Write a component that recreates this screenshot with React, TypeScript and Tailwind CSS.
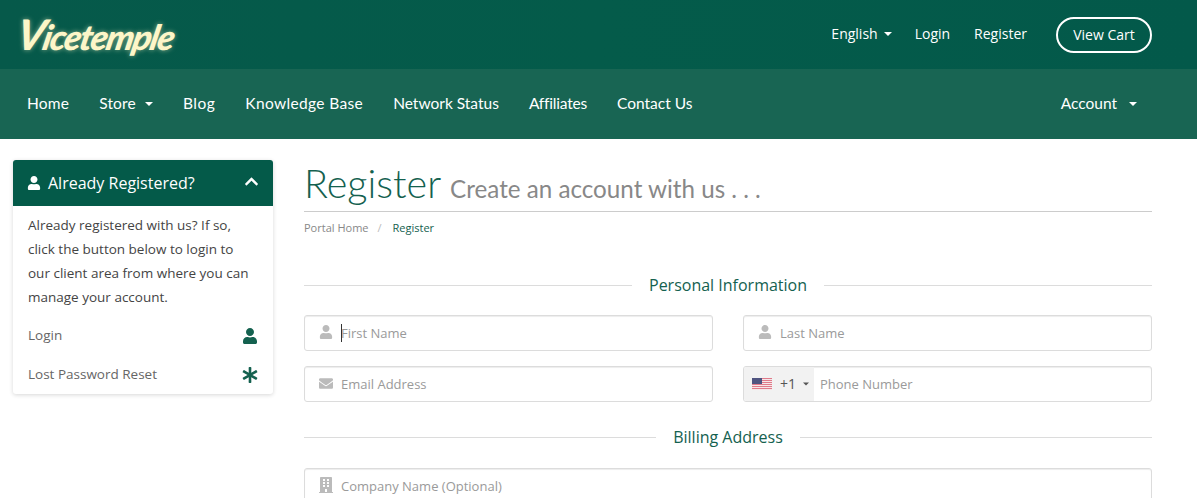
import { FaAsterisk, FaBuilding, FaChevronUp, FaEnvelope, FaUser } from 'react-icons/fa';
import type { ReactNode } from 'react';

const Caret = ({ className = 'border-t-white' }: { className?: string }) => (
  <span className={`inline-block h-0 w-0 border-x-4 border-t-4 border-x-transparent ${className}`} />
);

function SectionTitle({ children }: { children: string }) {
  return (
    <div className="flex items-center gap-[17px]">
      <div className="h-px flex-1 bg-[#dcdcdc]" />
      <span className="text-base leading-6 text-[#14614f]">{children}</span>
      <div className="h-px flex-1 bg-[#dcdcdc]" />
    </div>
  );
}

function Field({ icon, placeholder, cursor }: { icon: ReactNode; placeholder: string; cursor?: boolean }) {
  return (
    <div className="relative h-9 rounded-[3px] border border-[#dcdcdc] bg-white shadow-[inset_0_1px_1px_rgba(0,0,0,0.075)]">
      <span className="absolute left-3.5 top-0 flex h-[32px] w-[14px] items-center justify-center text-[14px] text-[#bbbbbb]">
        {icon}
      </span>
      <input
        placeholder={placeholder}
        readOnly
        className="h-full w-full bg-transparent pl-9 text-[13px] outline-none placeholder:text-[#9a9a9a]"
      />
      {cursor && <span className="absolute left-9 top-2 h-[18px] w-px bg-[#333333]" />}
    </div>
  );
}

function PhoneField() {
  return (
    <div className="flex h-9 overflow-hidden rounded-[3px] border border-[#dcdcdc] bg-white shadow-[inset_0_1px_1px_rgba(0,0,0,0.075)]">
      <div className="flex w-[70px] items-center bg-[#f2f2f2] pl-2">
        <svg width="20" height="12" viewBox="0 0 20 12" className="mb-[1px] shrink-0">
          <rect width="20" height="12" fill="#f6e6e8" />
          <rect y="0" width="20" height="1" fill="#e07a8a" />
          <rect y="2" width="20" height="1" fill="#e07a8a" />
          <rect y="4" width="20" height="1" fill="#e07a8a" />
          <rect y="6" width="20" height="1" fill="#e07a8a" />
          <rect y="8" width="20" height="1" fill="#e07a8a" />
          <rect y="10" width="20" height="1" fill="#e07a8a" />
          <rect width="10" height="6" fill="#4f5480" />
        </svg>
        <span className="ml-2 text-sm text-[#555555]">+1</span>
        <Caret className="ml-[6px] scale-75 border-t-[#555555]" />
      </div>
      <input
        placeholder="Phone Number"
        readOnly
        className="h-full flex-1 bg-transparent pl-1.5 text-[13px] outline-none placeholder:text-[#9a9a9a]"
      />
    </div>
  );
}

export default function App() {
  return (
    <div className="h-[498px] overflow-hidden bg-white font-['Open_Sans',sans-serif] text-[#444444]">
      {/* Top bar */}
      <header className="flex h-[69px] items-center justify-between bg-gradient-to-r from-[#06594a] via-[#045b4a] to-[#03594a] pl-[18px] pr-[45px]">
        <span className="-skew-x-12 pb-[2px] font-['Lato',sans-serif] text-[35px] font-black italic leading-none tracking-[-1.5px] text-[#fdf6c8] [text-shadow:0_0_5px_rgba(253,246,200,0.55)]">
          <span className="text-[42px]">V</span>icetemple
        </span>
        <div className="flex items-center text-sm text-white">
          <div className="flex items-center pb-[2px]">
            <span>English</span>
            <Caret className="ml-[6px] border-t-white" />
            <span className="ml-[23px]">Login</span>
            <span className="ml-6">Register</span>
          </div>
          <span className="ml-[29px] flex h-[36px] w-[96px] items-center justify-center rounded-full border-2 border-white">
            View Cart
          </span>
        </div>
      </header>

      {/* Main nav */}
      <nav className="flex h-[70px] items-center justify-between bg-[#186553] pl-[27px] pr-[60px] font-['Lato',sans-serif] text-[15.5px] text-white">
        <div className="flex items-center gap-[30px]">
          <span className="tracking-[0.2px]">Home</span>
          <span className="flex items-center tracking-[0.2px]">
            Store
            <Caret className="ml-[9px] border-t-white" />
          </span>
          <span className="tracking-[0.5px]">Blog</span>
          <span className="tracking-[0.35px]">Knowledge Base</span>
          <span>Network Status</span>
          <span className="tracking-[-0.2px]">Affiliates</span>
          <span>Contact Us</span>
        </div>
        <span className="flex items-center">
          Account
          <Caret className="ml-[12px] border-t-white" />
        </span>
      </nav>

      <div className="flex gap-[31px] pl-[13px] pr-[45px] pt-[21px]">
        {/* Sidebar */}
        <aside className="w-[260px] shrink-0 self-start rounded-[3px] bg-white shadow-[0_1px_4px_rgba(0,0,0,0.16)]">
          <div className="flex h-[46px] items-center justify-between rounded-t-[3px] bg-[#045a49] pl-[14px] pr-[14px] text-white">
            <span className="flex items-center gap-[7px] text-base">
              <FaUser className="text-[14px]" />
              Already Registered?
            </span>
            <FaChevronUp className="mb-[4px] text-[15px]" />
          </div>
          <p className="px-[15px] pt-[7px] text-[13.5px] leading-6 text-[#444444]">
            Already registered with us? If so, click the button below to login to our client area from where you can
            manage your account.
          </p>
          <div className="mt-[7px] flex h-[39px] items-center justify-between pl-[15px] pr-[15px] text-[13.5px] text-[#666666]">
            Login
            <FaUser className="text-base text-[#14614f]" />
          </div>
          <div className="flex h-[39px] items-center justify-between pl-[15px] pr-[15px] text-[13.5px] text-[#666666]">
            Lost Password Reset
            <FaAsterisk className="text-base text-[#14614f]" />
          </div>
        </aside>

        {/* Content */}
        <main className="min-w-0 flex-1">
          <div className="flex h-[52px] items-baseline gap-[9px] border-b border-[#cccccc] font-['Lato',sans-serif]">
            <h1 className="text-[39.5px] font-light leading-[46px] text-[#14614f]">Register</h1>
            <span className="text-[24.2px] text-[#888888]">Create an account with us . . .</span>
          </div>
          <div className="mt-[8px] flex items-center text-[11px] leading-[16px] text-[#888888]">
            Portal Home
            <span className="ml-[9px] mr-[11px] text-[#bbbbbb]">/</span>
            <span className="text-[#14614f]">Register</span>
          </div>

          <div className="mt-[37px]">
            <SectionTitle>Personal Information</SectionTitle>
          </div>
          <div className="mt-[18px] grid grid-cols-2 gap-x-[30px] gap-y-[15px]">
            <Field icon={<FaUser />} placeholder="First Name" cursor />
            <Field icon={<FaUser />} placeholder="Last Name" />
            <Field icon={<FaEnvelope className="text-[15px]" />} placeholder="Email Address" />
            <PhoneField />
          </div>

          <div className="mt-[23px]">
            <SectionTitle>Billing Address</SectionTitle>
          </div>
          <div className="mt-[19px]">
            <Field icon={<FaBuilding className="text-[16px]" />} placeholder="Company Name (Optional)" />
          </div>
        </main>
      </div>
    </div>
  );
}
